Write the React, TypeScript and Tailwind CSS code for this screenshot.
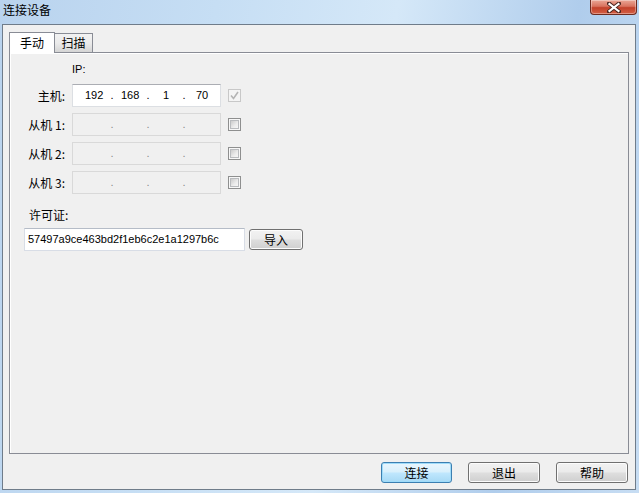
import React from "react";

const cjk = "font-['Noto_Sans_CJK_SC','Microsoft_YaHei',sans-serif]";
const latin = "font-['Liberation_Sans','Noto_Sans_CJK_SC',sans-serif]";

const CloseButton = () => (
  <div className="mr-[2px] flex h-[15px] w-[47px] items-center justify-center rounded-b-[4px] border border-t-0 border-[#6d2b20] bg-[linear-gradient(#eaa796,#d9735f_45%,#c2412a_55%,#d45f45)] shadow-[inset_0_0_0_1px_rgba(255,255,255,0.35)]">
    <svg width="14" height="11" viewBox="0 0 14 11">
      <path
        d="M2 1.5 L12 9.5 M12 1.5 L2 9.5"
        stroke="#4a2520"
        strokeWidth="4"
        strokeLinecap="square"
      />
      <path
        d="M2.5 2 L11.5 9 M11.5 2 L2.5 9"
        stroke="#ffffff"
        strokeWidth="2.2"
        strokeLinecap="square"
      />
    </svg>
  </div>
);

const Checkbox = ({ checked, disabled }: { checked?: boolean; disabled?: boolean }) => (
  <div
    className={
      disabled
        ? "flex h-[13px] w-[13px] items-center justify-center border border-[#c8c8c8] bg-[#f4f4f4]"
        : "h-[13px] w-[13px] border border-[#8e8f8f] bg-[#f7f7f7] p-px"
    }
  >
    {checked ? (
      <svg width="9" height="9" viewBox="0 0 9 9">
        <path d="M1 4.5 L3.5 7.5 L8 1" fill="none" stroke="#b4b4b4" strokeWidth="1.6" />
      </svg>
    ) : (
      <div className="h-full w-full border border-[#b9bbbe] bg-[linear-gradient(135deg,#cbcbcb,#ececec_60%,#f6f6f6)]" />
    )}
  </div>
);

const IpBox = ({ parts, disabled }: { parts: string[]; disabled?: boolean }) => {
  const cells = [parts[0], ".", parts[1], ".", parts[2], ".", parts[3]];
  return (
    <div
      className={
        disabled
          ? "flex h-[23px] w-[149px] items-center border border-[#d9d9d9] bg-[#f0f0f0] pl-[12px] text-[#8a8a8a]"
          : "flex h-[23px] w-[149px] items-center border border-[#dcdfe3] border-t-[#abadb3] bg-white pl-[12px] text-black"
      }
    >
      {cells.map((c, i) => (
        <span key={i} className={`w-[18px] text-center text-[11px] leading-none ${latin}`}>
          {c}
        </span>
      ))}
    </div>
  );
};

const Row = ({ label, parts, disabled, checked }: { label: string; parts: string[]; disabled?: boolean; checked?: boolean }) => (
  <div className="flex items-center">
    <div className={`w-[55px] text-right text-[12px] leading-4 text-black ${cjk}`}>{label}</div>
    <div className="ml-[7px]">
      <IpBox parts={parts} disabled={disabled} />
    </div>
    <div className="ml-[7px]">
      <Checkbox checked={checked} disabled={checked} />
    </div>
  </div>
);

const WinButton = ({ label, primary, w }: { label: string; primary?: boolean; w: string }) => (
  <div
    className={`${w} flex h-[21px] items-center justify-center rounded-[3px] border text-[12px] text-black ${cjk} ${
      primary
        ? "border-[#3c7fb1] bg-[linear-gradient(#eaf6fd,#d9f0fc_45%,#bee6fd_55%,#a7d9f5)] shadow-[inset_0_0_0_1px_#9fdcfa]"
        : "border-[#707070] bg-[linear-gradient(#f2f2f2,#ebebeb_45%,#dddddd_55%,#cfcfcf)] shadow-[inset_0_0_0_1px_#fcfcfc]"
    }`}
  >
    {label}
  </div>
);

export default function App() {
  const empty = ["", "", "", ""];
  return (
    <div className="flex h-[493px] w-[639px] flex-col bg-[linear-gradient(100deg,#b9d3ee,#c6def4_30%,#d5e8f8_55%,#b0cdec_80%,#c7ddf3)]">
      <div className="flex h-[24px] items-start justify-between">
        <div className={`pl-[3px] pt-[2px] text-[12px] leading-4 text-black ${cjk}`}>连接设备</div>
        <CloseButton />
      </div>
      <div className="mb-[3px] ml-[2px] mr-[3px] flex flex-1 flex-col border border-[#6f7c8a] bg-[#f0f0f0] pl-[6px] pr-[7px] pt-[7px]">
        <div className="flex h-[20px] items-end">
          <div className={`relative z-10 -mb-px flex h-[21px] w-[46px] items-center justify-center border border-b-0 border-[#898c95] bg-white text-[12px] ${cjk}`}>
            手动
          </div>
          <div className={`flex h-[19px] w-[38px] items-center justify-center border border-b-0 border-l-0 border-[#898c95] bg-[linear-gradient(#f2f2f2,#ebebeb_50%,#d5d5d5)] text-[12px] ${cjk}`}>
            扫描
          </div>
        </div>
        <div className="flex h-[402px] w-[620px] flex-col border border-[#898c95] bg-[#f0f0f0] pt-[8px] shadow-[inset_1px_1px_0_#ffffff]">
          <div className={`ml-[62px] text-[11px] leading-4 text-black ${latin}`}>IP:</div>
          <div className="mt-[7px] flex flex-col gap-[6px]">
            <Row label="主机:" parts={["192", "168", "1", "70"]} checked />
            <Row label="从机 1:" parts={empty} disabled />
            <Row label="从机 2:" parts={empty} disabled />
            <Row label="从机 3:" parts={empty} disabled />
          </div>
          <div className="mt-[13px] pl-[14px]">
            <div className={`ml-[5px] text-[12px] leading-4 text-black ${cjk}`}>许可证:</div>
            <div className="mt-[5px] flex items-center">
              <div className={`flex h-[23px] w-[221px] items-center border border-[#d8dde6] border-t-[#b5bcc7] bg-white pl-[3px] text-[11px] text-black ${latin}`}>
                57497a9ce463bd2f1eb6c2e1a1297b6c
              </div>
              <div className="ml-[4px]">
                <WinButton label="导入" w="w-[54px]" />
              </div>
            </div>
          </div>
        </div>
        <div className="mt-[8px] flex justify-end gap-[16px]">
          <WinButton label="连接" primary w="w-[71px]" />
          <WinButton label="退出" w="w-[72px]" />
          <WinButton label="帮助" w="w-[72px]" />
        </div>
      </div>
    </div>
  );
}
